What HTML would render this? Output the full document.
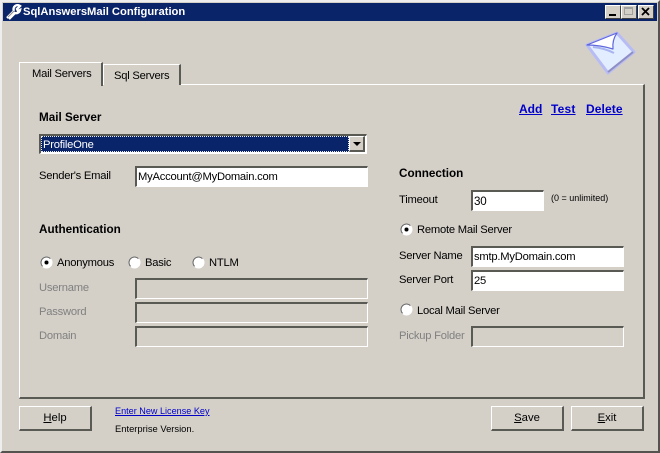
<!DOCTYPE html>
<html>
<head>
<meta charset="utf-8">
<style>
html,body{margin:0;padding:0;width:660px;height:453px;overflow:hidden;background:#d4d0c8}
body{position:relative;font-family:"Liberation Sans",sans-serif;font-size:11.2px;letter-spacing:-.22px;color:#000}
.a{position:absolute;white-space:nowrap;line-height:17px}
.b{font-weight:bold;font-size:11.7px;letter-spacing:0;line-height:15px}
.d{color:#808080}
.i{position:absolute;box-sizing:border-box;border-top:2px solid #5a5a55;border-left:2px solid #5a5a55;border-right:1px solid #fff;border-bottom:1px solid #fff;background:#fff;line-height:19px;padding-left:1px;white-space:nowrap;height:21px}
.i.g{background:#d4d0c8}
.btn{position:absolute;box-sizing:border-box;border-top:1px solid #fff;border-left:1px solid #fff;border-right:2px solid #5a5a55;border-bottom:2px solid #5a5a55;background:#d4d0c8;text-align:center;line-height:22px;height:25px;top:406px;font-size:11.3px;letter-spacing:0}
.r{position:absolute;width:13px;height:13px}
a{color:#0000c8}
.wb{position:absolute;top:5px;width:16px;height:14px;box-sizing:border-box;background:#d4d0c8;border-top:1px solid #fff;border-left:1px solid #fff;border-right:1px solid #404040;border-bottom:1px solid #404040}
</style>
</head>
<body>
<div style="position:absolute;left:0;top:0;width:660px;height:453px;box-sizing:border-box;border-top:2px solid #eee;border-left:2px solid #eee;border-right:2px solid #55534f;border-bottom:2px solid #55534f"></div>
<div style="position:absolute;left:3px;top:3px;width:654px;height:18px;background:#0a246a"></div>
<svg style="position:absolute;left:5px;top:4px" width="17" height="16" viewBox="0 0 17 16"><path d="M2 14 L9 7 M9 7 A4 4 0 0 1 15 2 L12 5 L13 7 L15 6 A4 4 0 0 1 10 9 L4 15" fill="none" stroke="#fff" stroke-width="2.4"/><path d="M3 13 L9 7" stroke="#8a8a8a" stroke-width="1"/></svg>
<div class="a" style="left:23px;top:5px;color:#fff;font-size:11.2px;font-weight:bold;letter-spacing:0;line-height:15px">SqlAnswersMail Configuration</div>
<div class="wb" style="left:605px"><div style="position:absolute;left:3px;bottom:2px;width:7px;height:2px;background:#000"></div></div>
<div class="wb" style="left:621px"><div style="position:absolute;left:2px;top:1px;width:9px;height:8px;border:1px solid #a0a0a0;border-top-width:2px;box-sizing:border-box"></div></div>
<div class="wb" style="left:638px"><svg style="position:absolute;left:2px;top:1px" width="10" height="9"><path d="M1 1 L8 8 M8 1 L1 8" stroke="#000" stroke-width="1.8"/></svg></div>

<svg style="position:absolute;left:584px;top:30px" width="54" height="46" viewBox="0 0 54 46">
<path d="M3 15 L33 3 L50 22 L24 43 Z" fill="#e2edff" stroke="#b8bcf4" stroke-width="3" stroke-linejoin="round"/>
<path d="M24 42 L49 22" stroke="#8e8ec4" stroke-width="2"/>
<path d="M3 15 L33 3 Q28 10 29 19 Q16 15 3 15 Z" fill="#fff" stroke="#6068dc" stroke-width="1.2" stroke-linejoin="round"/>
<path d="M9 17 Q20 18 30 23" fill="none" stroke="#a8b4f0" stroke-width="2"/>
</svg>

<!-- tab panel -->
<div style="position:absolute;left:19px;top:84px;width:626px;height:315px;box-sizing:border-box;border-top:1px solid #fff;border-left:1px solid #fff;border-right:2px solid #5a5a55;border-bottom:2px solid #5a5a55"></div>
<div style="position:absolute;left:103px;top:64px;width:78px;height:21px;box-sizing:border-box;border-top:1px solid #fff;border-left:1px solid #fff;border-right:2px solid #5a5a55;background:#d4d0c8"></div>
<div style="position:absolute;left:19px;top:62px;width:84px;height:24px;box-sizing:border-box;border-top:1px solid #fff;border-left:1px solid #fff;border-right:2px solid #5a5a55;background:#d4d0c8"></div>
<div class="a" style="left:32px;top:66px">Mail Servers</div>
<div class="a" style="left:114px;top:68px">Sql Servers</div>

<!-- left -->
<div class="a b" style="left:39px;top:110px">Mail Server</div>
<div class="i" style="left:39px;top:134px;width:328px;height:20px;background:#fff"></div>
<div style="position:absolute;left:41px;top:136px;width:308px;height:16px;box-sizing:border-box;background:#0a246a;border:1px dotted #e8e8e8"></div>
<div class="a" style="left:43px;top:137px;color:#fff">ProfileOne</div>
<div class="btn" style="left:349px;top:136px;width:16px;height:16px"><div style="position:absolute;left:3px;top:5px;width:0;height:0;border-left:4px solid transparent;border-right:4px solid transparent;border-top:4px solid #000"></div></div>
<div class="a" style="left:39px;top:168px">Sender's Email</div>
<div class="i" style="left:135px;top:166px;width:233px">MyAccount@MyDomain.com</div>

<div class="a b" style="left:39px;top:222px">Authentication</div>
<svg class="r" style="left:40px;top:256px"><circle cx="6.5" cy="6.5" r="5.5" fill="#fff" stroke="#fff"/><path d="M2.6 10.4A5.5 5.5 0 0 1 10.4 2.6" fill="none" stroke="#666"/><circle cx="6.5" cy="6.5" r="2" fill="#000"/></svg>
<div class="a" style="left:57px;top:255px">Anonymous</div>
<svg class="r" style="left:128px;top:256px"><circle cx="6.5" cy="6.5" r="5.5" fill="#fff" stroke="#fff"/><path d="M2.6 10.4A5.5 5.5 0 0 1 10.4 2.6" fill="none" stroke="#666"/></svg>
<div class="a" style="left:145px;top:255px">Basic</div>
<svg class="r" style="left:192px;top:256px"><circle cx="6.5" cy="6.5" r="5.5" fill="#fff" stroke="#fff"/><path d="M2.6 10.4A5.5 5.5 0 0 1 10.4 2.6" fill="none" stroke="#666"/></svg>
<div class="a" style="left:209px;top:255px">NTLM</div>

<div class="a d" style="left:39px;top:280px">Username</div>
<div class="i g" style="left:135px;top:278px;width:233px"></div>
<div class="a d" style="left:39px;top:304px">Password</div>
<div class="i g" style="left:135px;top:302px;width:233px"></div>
<div class="a d" style="left:39px;top:328px">Domain</div>
<div class="i g" style="left:135px;top:326px;width:233px"></div>

<!-- right -->
<a class="a b" style="left:519px;top:102px;font-size:12px" href="#">Add</a>
<a class="a b" style="left:551px;top:102px;font-size:12px;letter-spacing:.2px" href="#">Test</a>
<a class="a b" style="left:586px;top:102px;font-size:12px;letter-spacing:.1px" href="#">Delete</a>

<div class="a b" style="left:399px;top:166px">Connection</div>
<div class="a" style="left:399px;top:192px">Timeout</div>
<div class="i" style="left:471px;top:190px;width:73px;font-size:11.6px">30</div>
<div class="a" style="left:551px;top:190px;font-size:9px;letter-spacing:0">(0 = unlimited)</div>

<svg class="r" style="left:400px;top:223px"><circle cx="6.5" cy="6.5" r="5.5" fill="#fff" stroke="#fff"/><path d="M2.6 10.4A5.5 5.5 0 0 1 10.4 2.6" fill="none" stroke="#666"/><circle cx="6.5" cy="6.5" r="2" fill="#000"/></svg>
<div class="a" style="left:417px;top:222px">Remote Mail Server</div>
<div class="a" style="left:399px;top:248px">Server Name</div>
<div class="i" style="left:471px;top:246px;width:153px">smtp.MyDomain.com</div>
<div class="a" style="left:399px;top:272px">Server Port</div>
<div class="i" style="left:471px;top:270px;width:153px">25</div>
<svg class="r" style="left:400px;top:303px"><circle cx="6.5" cy="6.5" r="5.5" fill="#fff" stroke="#fff"/><path d="M2.6 10.4A5.5 5.5 0 0 1 10.4 2.6" fill="none" stroke="#666"/></svg>
<div class="a" style="left:417px;top:303px">Local Mail Server</div>
<div class="a d" style="left:399px;top:328px">Pickup Folder</div>
<div class="i g" style="left:471px;top:326px;width:153px"></div>

<!-- bottom -->
<div class="btn" style="left:19px;width:73px"><u>H</u>elp</div>
<a class="a" style="left:115px;top:403px;font-size:9.1px;letter-spacing:0" href="#">Enter New License Key</a>
<div class="a" style="left:115px;top:420px;font-size:9.4px;letter-spacing:0">Enterprise Version.</div>
<div class="btn" style="left:491px;width:73px"><u>S</u>ave</div>
<div class="btn" style="left:571px;width:73px"><u>E</u>xit</div>
</body>
</html>
